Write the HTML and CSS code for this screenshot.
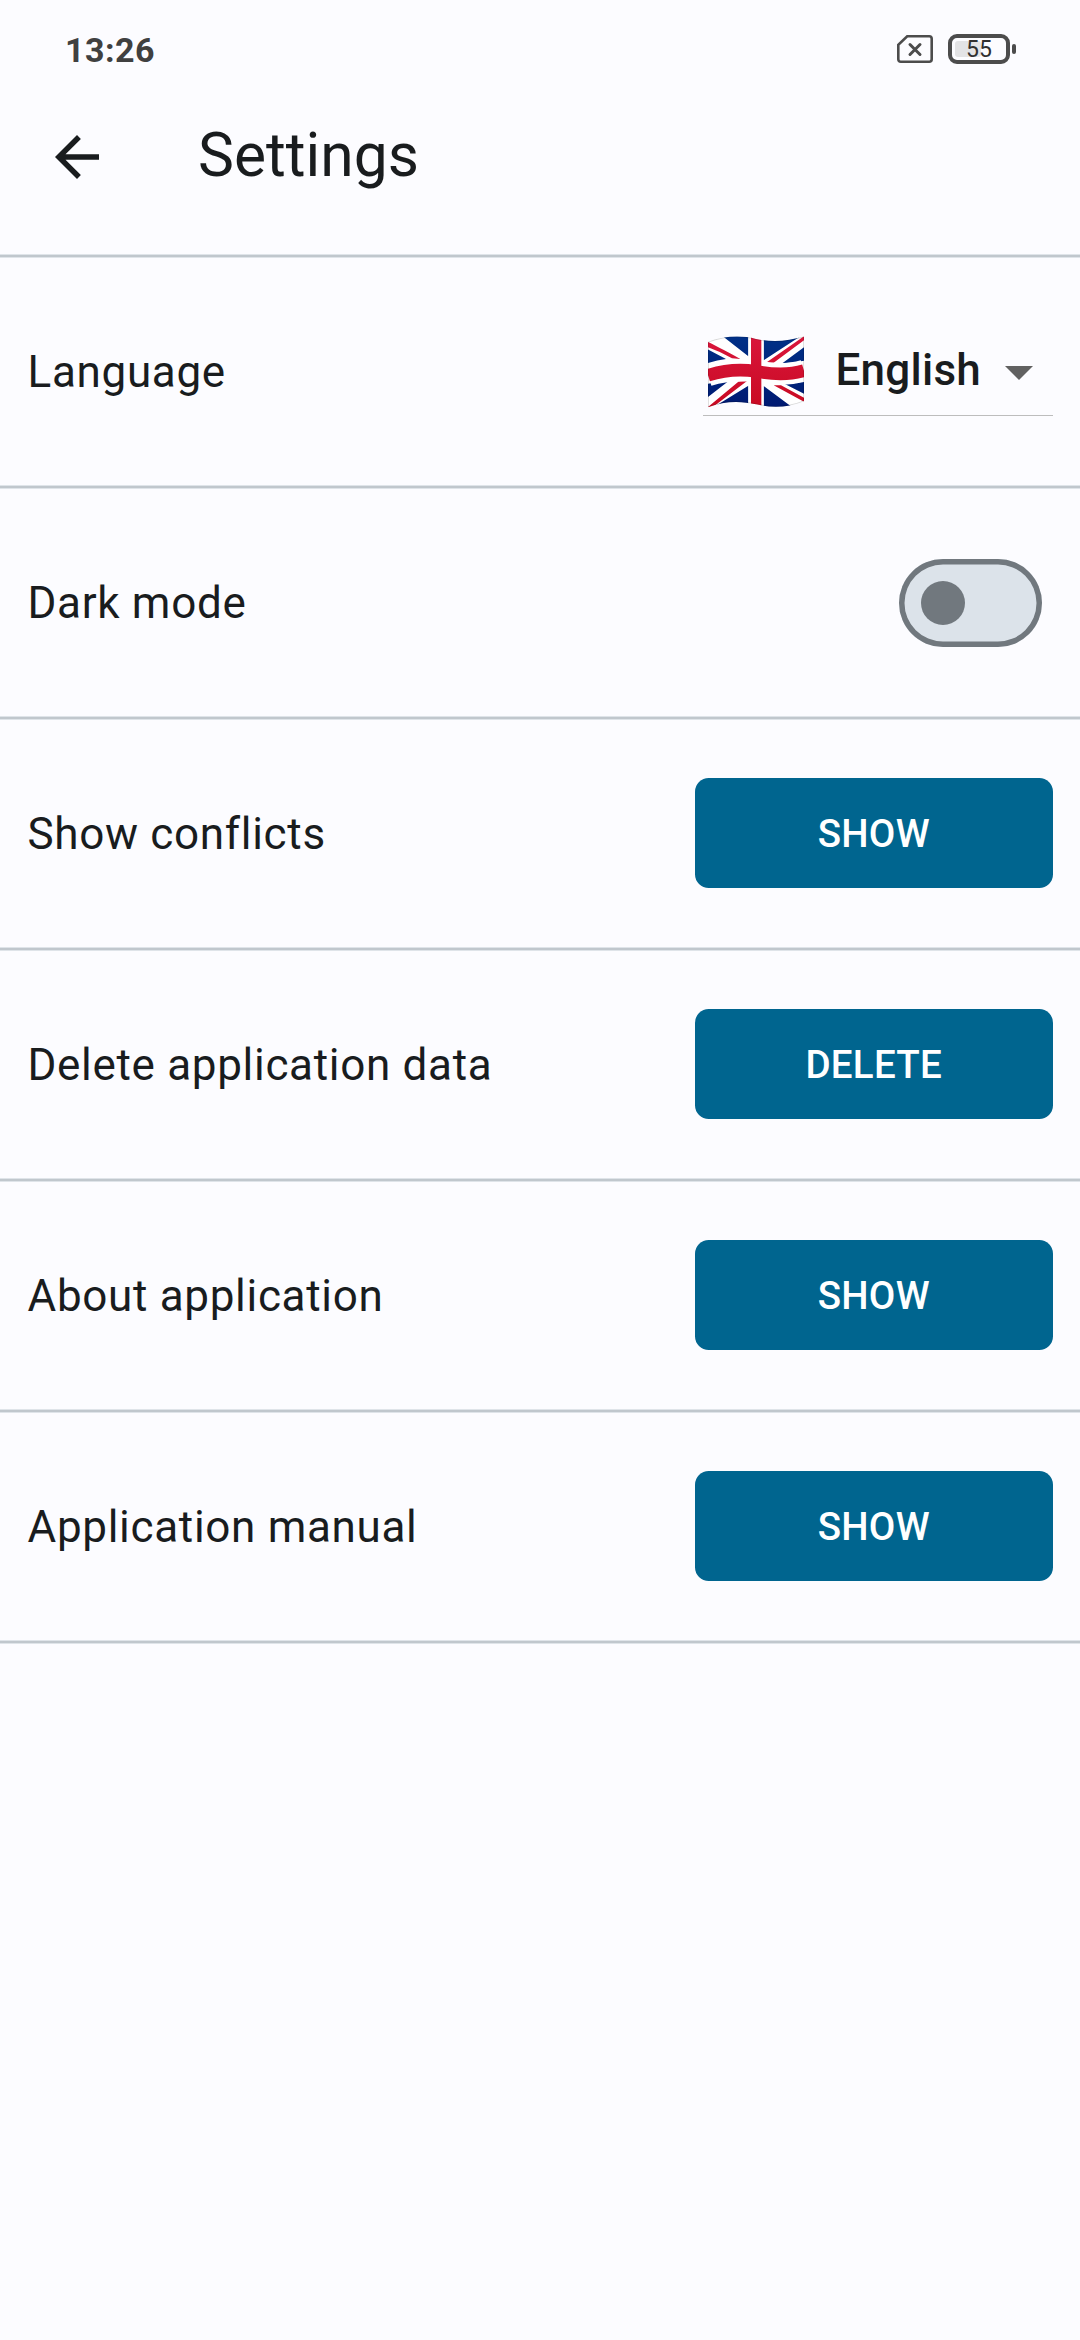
FILE: index.html
```html
<!DOCTYPE html>
<html lang="en">
<head>
<meta charset="utf-8">
<title>Settings</title>
<link rel="stylesheet" href="styles.css">
</head>
<body>
<div class="status-bar">
  <span class="clock">13:26</span>
  <div class="status-icons">
    <svg class="sim-icon" viewBox="0 0 36 28" fill="none" stroke="#4c4c4c">
      <path d="M10.2 1.3H32.2Q34.7 1.3 34.7 3.8V24.2Q34.7 26.7 32.2 26.7H3.8Q1.3 26.7 1.3 24.2V9.8Z" stroke-width="2.6"/>
      <path d="M13 9.5L23 19.5M23 9.5L13 19.5" stroke-width="3" stroke-linecap="round"/>
    </svg>
    <div class="battery">
      <div class="battery-body"><span class="battery-level"></span><span class="battery-text">55</span></div>
      <span class="battery-tip"></span>
    </div>
  </div>
</div>
<header class="app-bar">
  <svg class="back-icon" viewBox="4 4 16 16"><path fill="#191c1e" d="M20 11H7.83l5.59-5.59L12 4l-8 8 8 8 1.41-1.41L7.83 13H20v-2z"/></svg>
  <h1 class="title">Settings</h1>
</header>
<main class="settings">
  <section class="row">
    <span class="label">Language</span>
    <div class="dropdown">
      <svg class="flag" viewBox="81 78 288 216">
        <defs>
          <clipPath id="flag-shape"><path d="M81 95C130 78 180 75 225 87C270 97 320 95 369 79V274C320 294 270 294 225 283C180 272 130 272 81 292Z"/></clipPath>
          <linearGradient id="flag-blue" gradientUnits="userSpaceOnUse" x1="0" y1="80" x2="0" y2="290"><stop offset="0" stop-color="#003087"/><stop offset="1" stop-color="#001a72"/></linearGradient>
          <linearGradient id="flag-red" gradientUnits="userSpaceOnUse" x1="0" y1="80" x2="0" y2="290"><stop offset="0" stop-color="#d9163c"/><stop offset="1" stop-color="#c90a22"/></linearGradient>
        </defs>
        <g clip-path="url(#flag-shape)">
          <path fill="#fff" d="M81 70H369V300H81Z"/>
          <path fill="url(#flag-blue)" d="M114 70H202V139ZM70 113L135 147Q105 151 70 162ZM248 70H372L248 151ZM305 159L380 104V150Q350 158 305 159ZM70 224Q105 214 140 215L70 270ZM202 227V300H84ZM248 228V300H345ZM310 221Q345 222 380 212V257Z"/>
          <path fill="url(#flag-red)" d="M70 92Q85 96 178 147L153 145Q110 120 70 108ZM255 158L380 71V83L278 158ZM172 215L198 213L84 300H70ZM278 226L300 226L380 269V281Z"/>
          <path fill="none" stroke="#fff" stroke-width="66" d="M81 196C130 180 170 176 225 184C270 193 320 197 369 182"/>
          <path fill="#fff" d="M202 70H248V300H202Z"/>
          <path fill="none" stroke="url(#flag-red)" stroke-width="38" d="M81 196C130 180 170 176 225 184C270 193 320 197 369 182"/>
          <path fill="url(#flag-red)" d="M210 70H241V300H210Z"/>
          <path fill="none" stroke="#000" stroke-opacity=".15" stroke-width="5" d="M81 95C130 78 180 75 225 87C270 97 320 95 369 79V274C320 294 270 294 225 283C180 272 130 272 81 292Z"/>
        </g>
      </svg>
      <span class="dropdown-value">English</span>
      <svg class="caret" viewBox="0 0 28 14"><path fill="#616161" d="M0 0H28L14 14Z"/></svg>
    </div>
  </section>
  <section class="row"><span class="label">Dark mode</span><span class="switch"><span class="thumb"></span></span></section>
  <section class="row"><span class="label">Show conflicts</span><button class="button">SHOW</button></section>
  <section class="row"><span class="label">Delete application data</span><button class="button">DELETE</button></section>
  <section class="row"><span class="label">About application</span><button class="button">SHOW</button></section>
  <section class="row"><span class="label">Application manual</span><button class="button">SHOW</button></section>
</main>
</body>
</html>
```
FILE: styles.css
```css
* { box-sizing: border-box; }
body {
  margin: 0;
  width: 1080px;
  height: 2340px;
  overflow: hidden;
  background: #fcfcff;
  color: #191c1e;
  font-family: Roboto, sans-serif;
}
.status-bar {
  display: flex;
  justify-content: space-between;
  height: 100px;
  padding: 30px 64px 0 65px;
}
.clock {
  font-size: 34px;
  line-height: 40px;
  font-weight: 700;
  letter-spacing: 0.5px;
  color: #404040;
}
.status-icons { display: flex; align-items: flex-start; gap: 15px; padding-top: 4px; }
.sim-icon { width: 36px; height: 28px; margin-top: 1px; }
.battery { display: flex; align-items: center; gap: 2px; }
.battery-body {
  position: relative;
  width: 62px;
  height: 30px;
  border: 4px solid #4c4c4c;
  border-radius: 9px;
  display: flex;
  justify-content: center;
  align-items: center;
}
.battery-level {
  position: absolute;
  left: 3px;
  top: 3px;
  width: 26px;
  height: 16px;
  border-radius: 3px;
  background: #e3e3e5;
}
.battery-text { position: relative; font-size: 23px; line-height: 23px; font-weight: 400; color: #303030; }
.battery-tip { width: 4px; height: 10px; border-radius: 2px; background: #4c4c4c; }
.app-bar {
  display: flex;
  height: 158px;
  padding-left: 55px;
  background: linear-gradient(#dfe4e9 0 1px, #c0c7cd 1px 3px, #dfe4e9 3px) bottom / 100% 4px no-repeat;
}
.back-icon { width: 44px; height: 44px; margin-top: 35px; }
.title { margin: 21px 0 0 99px; font-size: 60.5px; line-height: 70px; font-weight: 400; }
.row {
  display: flex;
  justify-content: space-between;
  align-items: center;
  height: 231px;
  padding: 0 27.5px 4px;
  background: linear-gradient(#dfe4e9 0 1px, #c0c7cd 1px 3px, #dfe4e9 3px) bottom / 100% 4px no-repeat;
}
.label { font-size: 44px; line-height: 66px; letter-spacing: 0.6875px; }
.dropdown {
  display: flex;
  align-items: center;
  width: 350px;
  height: 88px;
  margin-top: 1px;
  border-bottom: 1px solid #bdbdbd;
  padding-left: 5px;
}
.flag { width: 96px; height: 72px; margin-top: 1px; }
.dropdown-value { margin: 0 0 3px 32px; font-size: 44px; line-height: 66px; font-weight: 500; letter-spacing: 0.25px; }
.caret { width: 28px; height: 14px; margin: 3px 0 0 24px; }
.switch {
  display: flex;
  align-items: center;
  width: 143px;
  height: 88px;
  margin: 1px 11px 0 0;
  padding-left: 22px;
  border-radius: 44px;
  box-shadow: inset 0 0 0 5.5px #71787e;
  background: #dce3ea;
}
.thumb { width: 44px; height: 44px; border-radius: 50%; background: #71787e; }
.button {
  width: 357.5px;
  height: 110px;
  margin-bottom: 1px;
  padding: 1px 0 0;
  border: 0;
  border-radius: 13.75px;
  background: #00658f;
  color: #fff;
  font: 500 38.5px/55px Roboto, sans-serif;
  letter-spacing: 0.275px;
}
```
